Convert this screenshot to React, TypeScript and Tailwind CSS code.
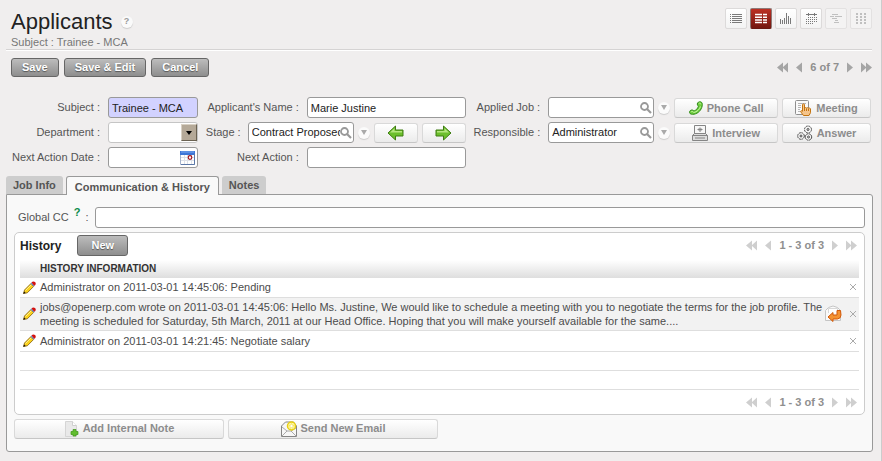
import React from "react";

const darkButton =
  "rounded-[3px] border border-[#666] bg-linear-to-b from-[#bdbdbd] to-[#8e8e8e] px-2.5 text-[11px] font-bold text-white [text-shadow:0_1px_1px_#555]";
const lightButton =
  "flex h-5 min-w-0 items-center justify-center gap-1 whitespace-nowrap rounded-[3px] border border-[#d9d9d9] border-b-[#c6c6c6] bg-linear-to-b from-white to-[#ebebeb] text-[11px] font-bold text-[#8c8c8c]";
const field =
  "h-[21px] w-full min-w-0 rounded-[3px] border border-[#999] bg-white px-[3px] text-[11px] text-[#222] outline-none";

type ArrowsProps = { text: string; color: string };

function Chevron({ d, w, color }: { d: string; w: number; color: string }) {
  return (
    <svg width={w} height="11" viewBox={`0 0 ${w} 11`} fill={color}>
      <path d={d} />
    </svg>
  );
}

function Pager({ text, color }: ArrowsProps) {
  return (
    <nav className="flex h-[15px] items-center gap-2 text-[11px] font-bold text-[#8f8f8f]" aria-label="Pagination">
      <button aria-label="First"><Chevron w={11} color={color} d="M6 .5v10L0 5.500zM11 .5v10L5.500 5.500z" /></button>
      <button aria-label="Previous"><Chevron w={6} color={color} d="M6 .5v10L0 5.500z" /></button>
      <span>{text}</span>
      <button aria-label="Next"><Chevron w={6} color={color} d="M0 .5v10L6 5.500z" /></button>
      <button aria-label="Last"><Chevron w={11} color={color} d="M0 .5v10L5.500 5.500zM5 .5v10L11 5.500z" /></button>
    </nav>
  );
}

const viewIcons: { name: string; art: React.ReactNode; state?: string }[] = [
  {
    name: "List view",
    art: <path d="M1 2.500h1M3 2.500h10M1 4.500h1M3 4.500h10M1 6.500h1M3 6.500h10M1 8.500h1M3 8.500h10M1 10.500h1M3 10.500h10" />,
  },
  {
    name: "Form view",
    state: "active",
    art: <path strokeWidth="1.500" d="M1 2.500h7M9 2.500h4M1 5.200h7M9 5.200h4M1 7.900h7M9 7.900h4M1 10.600h7M9 10.600h4" />,
  },
  {
    name: "Graph view",
    art: <path d="M1.500 7v5M3.500 8v4M5.500 6v6M7.500 1v11M9.500 4v8M11.500 6v6" />,
  },
  {
    name: "Calendar view",
    art: (
      <>
        <path d="M2 2.500h11M4.500 1v3M10.500 1v3" />
        <path strokeDasharray="1 1" d="M4 5.500h9M2 7.500h11M2 9.500h11M2 11.500h7" />
      </>
    ),
  },
  { name: "Gantt view", state: "off", art: <path d="M3 2.500h6M1 4.500h4M6 4.500h7M3 6.500h5M6 8.500h3M5 10.500h5" /> },
  {
    name: "Kanban view",
    state: "off",
    art: <path strokeWidth="2" strokeDasharray="2 1" d="M3 1v11M7 1v11M11 1v11" />,
  },
];

function ViewSwitch() {
  return (
    <div className="flex gap-[3px]">
      {viewIcons.map(({ name, art, state }) => (
        <button
          key={name}
          aria-label={name}
          className={
            "flex h-[21px] w-[22px] items-center justify-center rounded-[2px] border " +
            (state === "active"
              ? "border-[#8d7a78] border-b-[#6b1712] bg-linear-to-b from-[#bd3024] to-[#741710]"
              : state === "off"
                ? "border-[#e3e1e1] bg-[#f4f3f3]"
                : "border-[#dcdada] bg-linear-to-b from-white to-[#f3f3f3]")
          }
        >
          <svg
            width="14"
            height="13"
            viewBox="0 0 14 13"
            fill="none"
            stroke={state === "active" ? "#fff" : state === "off" ? "#c0c0c0" : "#7a7a7a"}
          >
            {art}
          </svg>
        </button>
      ))}
    </div>
  );
}

function Magnifier() {
  return (
    <svg width="12" height="12" viewBox="0 0 12 12" fill="none" stroke="#999">
      <circle cx="4.500" cy="4.500" r="3.500" strokeWidth="1.800" />
      <path d="M7 7l4 4" strokeWidth="2.200" />
    </svg>
  );
}

function LookupField({ id, value }: { id: string; value: string }) {
  return (
    <>
      <div className="flex h-[21px] w-[106px] shrink-0 items-center rounded-[3px] border border-[#999] bg-white pr-px pl-[3px]">
        <input id={id} defaultValue={value} className="w-0 grow text-[11px] text-[#222] outline-none" />
        <button aria-label="Search" className="shrink-0"><Magnifier /></button>
      </div>
      <button aria-label="Open" className="mx-1 flex size-3 shrink-0 items-center justify-center rounded-full bg-[#fbfbfb] shadow-[0_1px_1px_#ccc]">
        <svg width="6" height="5" viewBox="0 0 6 5" fill="#aaa"><path d="M0 0h6L3 5z" /></svg>
      </button>
    </>
  );
}

function GreenArrow({ next = false }: { next?: boolean }) {
  return (
    <svg width="17" height="16" viewBox="0 0 17 16" className={next ? "-scale-x-100" : ""}>
      <path d="M1 8l7.500-7v4H16v6H8.500v4z" fill="#6cbf2c" stroke="#3f7d12" strokeLinejoin="round" />
      <path d="M3 7.500l4.500-4.300V6H15v1.500z" fill="#b5e67f" />
    </svg>
  );
}

function PhoneIcon() {
  return (
    <svg width="14" height="14" viewBox="0 0 14 14">
      <path
        d="M8.300 3C8.300 1.500 10 .5 11.500.8c1.800.4 2 2.200 1.700 4-.7 4.200-4 7.700-8.200 8.400-2 .3-4.200 0-4.500-1.600C.3 10 1.700 8.800 3.300 9c1 .1 1.200 1 2 .8 1.700-.6 3.300-2.200 4-4C9.500 4.900 8.300 4.500 8.300 3z"
        fill="#6fcf3f"
        stroke="#2f8a17"
      />
      <path d="M9.800 2.500c1-.8 2-.3 2 .8M2.200 10.800c1-.8 1.800-.3 2.500.7C8 11 10.500 8.500 11.500 5.500" fill="none" stroke="#c5f5a0" />
    </svg>
  );
}

function MeetingIcon() {
  return (
    <svg width="17" height="16" viewBox="0 0 17 16">
      <rect x=".5" y=".5" width="13" height="14" rx="1" fill="#fafafa" stroke="#8f8f8f" />
      <path d="M3 3.500h8M3 5.500h3M3 7.500h3M3 9.500h2M3 11.500h2" stroke="#b5b5b5" />
      <path
        d="M7.500 10V4.500q1-1.200 2 0V8q1-1 2 0 1-.8 2 .2 1.200-.5 2 .5v4l-1.500 2.800H8.500L5.500 11.500q.3-1.500 2-.2z"
        fill="#f5c48a"
        stroke="#c4740f"
      />
      <path d="M9.500 8v3M11.500 8.500v2.500M13.500 8.800V11" stroke="#c4740f" />
    </svg>
  );
}

function PrinterIcon() {
  return (
    <svg width="16" height="16" viewBox="0 0 16 16" fill="#f7f7f7" stroke="#858585">
      <path d="M2.500 9V.5h11V9" />
      <path d="M8 7V2.500M5.500 4.500h5" fill="none" />
      <path d="M6.500 3l3 3M9.500 3l-3 3" fill="none" strokeWidth=".7" />
      <path d="M2.500 8.500h11l2 2v5H.5v-5z" fill="#ddd" />
      <path d="M.5 10.500h15M3 13h10" fill="none" />
    </svg>
  );
}

function GearsIcon() {
  return (
    <svg width="16" height="16" viewBox="0 0 16 16" fill="#f4f4f4" stroke="#4a4a4a">
      <circle cx="11" cy="4.500" r="3.500" strokeDasharray="2 .75" />
      <circle cx="4" cy="11" r="3.300" strokeDasharray="2 .6" />
      <circle cx="11.500" cy="12" r="3.200" strokeDasharray="2 .5" />
      <circle cx="11" cy="4.500" r="1" />
      <circle cx="4" cy="11" r="1" />
      <circle cx="11.500" cy="12" r="1" />
    </svg>
  );
}

function PencilIcon() {
  return (
    <svg width="13" height="13" viewBox="0 0 13 13">
      <path d="M.5 12.500L1.500 9l6.300-6.300 2.800 2.800-6.300 6.300z" fill="#fbd21c" stroke="#805a05" strokeWidth=".8" />
      <path d="M2.500 9.500L8.500 3.500" stroke="#fff08a" />
      <path d="M.3 12.700l.8-2.200 1.500 1.500z" fill="#111" />
      <path d="M7.500 2.500l1-1 3 3-1 1z" fill="#6b8fc9" />
      <path d="M8.500 1.500C9.500.2 11 .2 12 1s1 2.300 0 3.200l-.8.500z" fill="#d3120f" />
    </svg>
  );
}

function ReplyIcon() {
  return (
    <svg width="17" height="17" viewBox="0 0 17 17">
      <path d="M.5 15.500v-10l3-3Q8-.5 12.500 2.500l3 3v10z" fill="#fafafa" stroke="#c5c5c5" />
      <path d="M3.500 8V3.500h9V8" fill="#fff" stroke="#d8d8d8" />
      <path d="M15.500 5.500h-3.500v4.500H8V7.500L3 12l5 4.500V14h4.500q3.500-.5 3.500-4z" fill="#f59332" stroke="#d2590a" />
    </svg>
  );
}

function NoteIcon() {
  return (
    <svg width="15" height="16" viewBox="0 0 15 16">
      <path d="M1.500.5h7l4 4v11h-11z" fill="#e9e9e9" stroke="#d5d5d5" />
      <path d="M8.500.5v4h4" fill="#fff" stroke="#cfcfcf" />
      <path d="M9 8.500h3v2h2v3h-2V15H9v-1.500H7v-3h2z" fill="#62bd30" stroke="#3f961a" strokeWidth=".7" />
    </svg>
  );
}

function MailIcon() {
  return (
    <svg width="16" height="16" viewBox="0 0 16 16">
      <path d="M.5 15.500V5l4-4h8l3 4v10.500z" fill="#f7f7f7" stroke="#858585" />
      <path d="M1 15l5-5h4l5 5M1 6l5 4M15 7l-5 3" fill="none" stroke="#aaa" />
      <circle cx="10.500" cy="5" r="4" fill="#fff8a8" stroke="#e8cf12" strokeWidth="1.500" />
      <path d="M10.500 2.500l.8 1.700 1.700.2-1.300 1.200.3 1.800-1.500-.9-1.500.9.300-1.800L8 4.400l1.700-.2z" fill="#fff" stroke="#f0dc3c" strokeWidth=".6" />
    </svg>
  );
}

function CalendarIcon() {
  return (
    <svg width="15" height="14" viewBox="0 0 15 14">
      <path d="M.5.5h14v13H.5z" fill="#fff" stroke="#a5b3cc" />
      <path d="M0 0h15v4H0z" fill="#3d76d6" />
      <path d="M1 1h13" stroke="#7faaf0" />
      <path d="M1 6.500h13M1 9.500h13M4.500 4v9M7.500 4v9M11.500 4v9" stroke="#dde1e8" />
      <path d="M14.500 3v10.500H1" fill="none" stroke="#5b78a8" />
      <circle cx="10" cy="6.500" r="1.800" fill="#fff" stroke="#a3131c" strokeWidth="1.200" />
    </svg>
  );
}

const row = "flex h-[21px] items-center whitespace-nowrap";

function FormFields() {
  return (
    <div className="grid grid-cols-[187fr_268fr_208fr_197fr] pt-5 pr-1 pl-[5px] text-[11px] text-[#555]">
      <div className="flex flex-col gap-1">
        <div className={row}>
          <label htmlFor="subject" className="w-[89px] shrink-0 text-right">Subject :</label>
          <input id="subject" defaultValue="Trainee - MCA" className="ml-2 h-[21px] w-0 grow rounded-[3px] border border-[#999] bg-[#d2d2ff] px-[3px] text-[#222]" />
        </div>
        <div className={row}>
          <label htmlFor="department" className="w-[89px] shrink-0 text-right">Department :</label>
          <div className="relative ml-2 grow">
            <select id="department" className="block h-[21px] w-full appearance-none rounded-[3px] border border-[#c5c5c5] bg-white">
              <option></option>
            </select>
            <span className="pointer-events-none absolute top-0.5 right-px flex h-[17px] w-4 items-center justify-center border border-t-[#d8d0c4] border-r-[#6b6252] border-b-[#6b6252] border-l-[#d8d0c4] bg-[#b5a998]">
              <svg width="6" height="4" viewBox="0 0 6 4"><path d="M0 0h6L3 4z" /></svg>
            </span>
          </div>
        </div>
        <div className={row}>
          <label htmlFor="next-date" className="w-[89px] shrink-0 text-right">Next Action Date :</label>
          <div className="ml-2 flex h-[21px] grow items-center rounded-[3px] border border-[#999] bg-white px-0.5">
            <input id="next-date" className="w-0 grow outline-none" />
            <button aria-label="Pick a date"><CalendarIcon /></button>
          </div>
        </div>
      </div>

      <div className="flex flex-col gap-1 pl-2">
        <div className={row}>
          <label htmlFor="name" className="w-[93px] shrink-0 text-right">Applicant's Name :</label>
          <span className="ml-2 flex grow"><input id="name" defaultValue="Marie Justine" className={field} /></span>
        </div>
        <div className={row}>
          <label htmlFor="stage" className="mr-2 w-[34px] shrink-0">Stage :</label>
          <LookupField id="stage" value="Contract Proposed" />
          <div className="flex grow gap-1">
            <button aria-label="Previous stage" className={lightButton + " grow"}><GreenArrow /></button>
            <button aria-label="Next stage" className={lightButton + " grow"}><GreenArrow next /></button>
          </div>
        </div>
        <div className={row}>
          <label htmlFor="next-action" className="w-[93px] shrink-0 text-right">Next Action :</label>
          <span className="ml-2 flex grow"><input id="next-action" className={field} /></span>
        </div>
      </div>

      <div className="flex flex-col gap-1 pl-2">
        <div className={row}>
          <label htmlFor="job" className="mr-2 grow text-right">Applied Job :</label>
          <LookupField id="job" value="" />
        </div>
        <div className={row}>
          <label htmlFor="responsible" className="mr-2 grow text-right">Responsible :</label>
          <LookupField id="responsible" value="Administrator" />
        </div>
      </div>

      <div className="grid grid-cols-[104fr_89fr] content-start gap-x-1 gap-y-[5px] pt-px">
        <button className={lightButton}><PhoneIcon />Phone Call</button>
        <button className={lightButton}><MeetingIcon />Meeting</button>
        <button className={lightButton}><PrinterIcon />Interview</button>
        <button className={lightButton}><GearsIcon />Answer</button>
      </div>
    </div>
  );
}

const history = [
  { text: "Administrator on 2011-03-01 14:45:06: Pending", reply: false, style: "h-[19px]" },
  {
    text: "jobs@openerp.com wrote on 2011-03-01 14:45:06: Hello Ms. Justine, We would like to schedule a meeting with you to negotiate the terms for the job profile. The meeting is scheduled for Saturday, 5th March, 2011 at our Head Office. Hoping that you will make yourself available for the same....",
    reply: true,
    style: "h-[33px] bg-[#f2f2f2]",
  },
  { text: "Administrator on 2011-03-01 14:21:45: Negotiate salary", reply: false, style: "h-[21px]" },
];

function HistoryPanel() {
  return (
    <section className="mt-1 rounded-[5px] border border-[#ccc] bg-white px-[5px] pt-0.5">
      <div className="flex items-center justify-between pr-0.5">
        <div className="flex items-center gap-4">
          <h2 className="text-[12px] font-bold text-[#222]">History</h2>
          <button className={darkButton + " h-[21px] w-[51px]"}>New</button>
        </div>
        <Pager text="1 - 3 of 3" color="#cfcfcf" />
      </div>
      <table className="mt-1 w-full table-fixed border-collapse text-[11px] leading-[14px] text-[#4c4c4c]">
        <thead>
          <tr className="h-[18px] bg-linear-to-b from-white to-[#dedede]">
            <th className="w-5"></th>
            <th className="text-left text-[10px] font-bold text-[#333]">HISTORY INFORMATION</th>
            <th className="w-5"></th>
            <th className="w-[14px]"></th>
          </tr>
        </thead>
        <tbody>
          {history.map((item) => (
            <tr key={item.text} className={item.style + " border-b border-[#dedede]"}>
              <td className="pl-[3px]"><button aria-label="Edit" className="block"><PencilIcon /></button></td>
              <td>{item.text}</td>
              <td>{item.reply && <button aria-label="Reply" className="block"><ReplyIcon /></button>}</td>
              <td>
                <button aria-label="Delete" className="ml-1 block">
                  <svg width="8" height="8" viewBox="0 0 8 8" stroke="#aaa"><path d="M1 1l6 6M7 1L1 7" /></svg>
                </button>
              </td>
            </tr>
          ))}
          <tr className="h-[19px] border-b border-[#dedede]"><td colSpan={4}></td></tr>
          <tr className="h-[19px] border-b border-[#dedede]"><td colSpan={4}></td></tr>
        </tbody>
      </table>
      <div className="flex justify-end pt-[5px] pr-0.5 pb-1">
        <Pager text="1 - 3 of 3" color="#cfcfcf" />
      </div>
    </section>
  );
}

export default function App() {
  return (
    <div className="min-h-screen border-r border-[#ccc] bg-[#f0eeee] px-[6px] pb-[5px] font-['Liberation_Sans',Arial,sans-serif]">
      <header className="mr-[3px] flex items-start justify-between border-b border-[#d5d3d3] pt-2 pl-[5px]">
        <div>
          <div className="flex items-center gap-2">
            <h1 className="text-[22px] leading-[27px] text-[#222]">Applicants</h1>
            <button aria-label="Help" className="flex size-3 items-center justify-center rounded-full bg-[#fafafa] text-[9px] font-bold text-[#999] shadow-[0_1px_1px_#ccc]">?</button>
          </div>
          <p className="text-[11px] leading-[14px] text-[#777]">Subject : Trainee - MCA</p>
        </div>
        <ViewSwitch />
      </header>
      <div className="mr-[3px] flex items-center justify-between border-t border-white pt-[7px] pl-[5px]">
        <div className="flex gap-[5px]">
          <button className={darkButton + " h-[19px]"}>Save</button>
          <button className={darkButton + " h-[19px]"}>Save &amp; Edit</button>
          <button className={darkButton + " h-[19px]"}>Cancel</button>
        </div>
        <Pager text="6 of 7" color="#a5a5a5" />
      </div>

      <FormFields />

      <div role="tablist" className="mt-2 flex h-[19px] items-end gap-[3px] text-[11px] font-bold text-[#555]">
        <button role="tab" className="mb-px h-[18px] rounded-t-[3px] bg-[#cdcdcd] px-[7px]">Job Info</button>
        <button role="tab" aria-selected="true" className="z-10 h-[19px] rounded-t-[3px] border border-b-0 border-[#999] bg-[#f9f9f9] px-2 pt-0.5">Communication &amp; History</button>
        <button role="tab" className="mb-px h-[18px] rounded-t-[3px] bg-[#cdcdcd] px-[7px]">Notes</button>
      </div>
      <main className="-mt-px mr-[2px] rounded-b-[3px] rounded-tr-[3px] border border-[#999] bg-[#f9f9f9] pt-3 pr-[7px] pb-3 pl-[7px]">
        <div className="flex items-center text-[11px] text-[#555]">
          <label htmlFor="cc" className="flex w-[81px] shrink-0 items-center pl-1">
            Global CC<sup className="mx-[5px] text-[11px] font-bold text-[#0a8a4a]">?</sup>:
          </label>
          <input id="cc" className={field} />
        </div>
        <HistoryPanel />
        <div className="mt-1 flex gap-1">
          <button className={lightButton + " w-[210px]"}><NoteIcon />Add Internal Note</button>
          <button className={lightButton + " w-[210px]"}><MailIcon />Send New Email</button>
        </div>
      </main>
    </div>
  );
}
